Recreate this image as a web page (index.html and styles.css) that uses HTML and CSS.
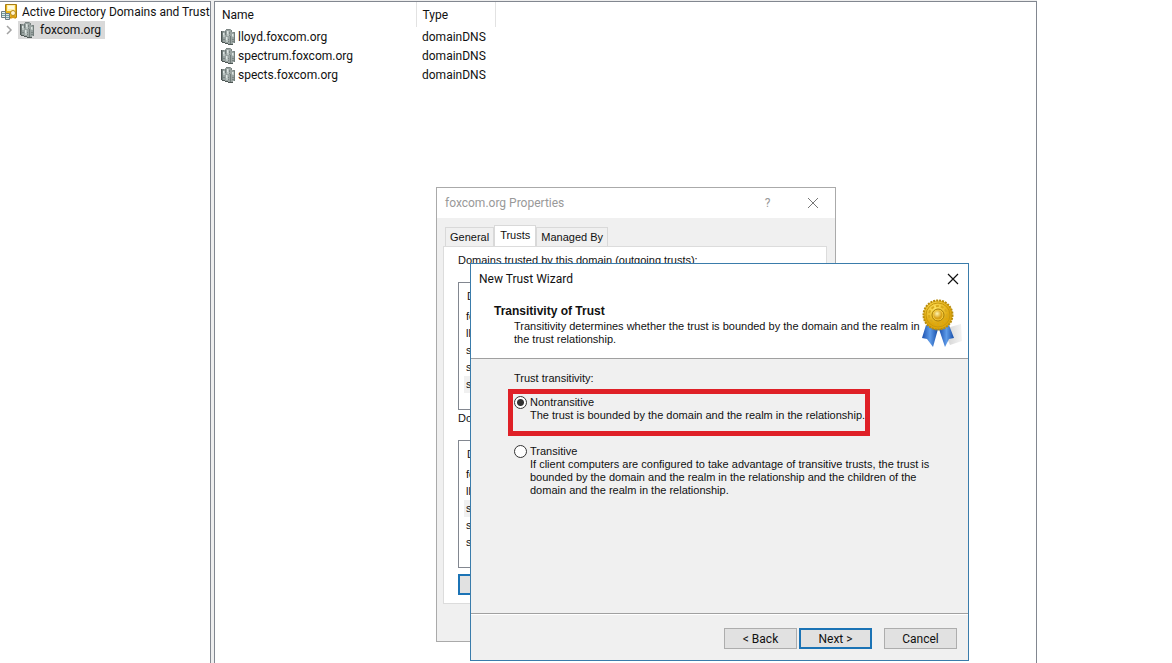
FILE: index.html
```html
<!DOCTYPE html>
<html lang="en">
<head>
    <meta charset="UTF-8">
    <meta name="viewport" content="width=device-width, initial-scale=1.0">
    <title>Active Directory Domains and Trusts</title>
    <link rel="stylesheet" href="styles.css">
</head>
<body>
    <!-- shared icon shapes -->
    <svg class="sprite" width="0" height="0">
        <symbol id="icon-domain" viewBox="0 0 15 16">
            <path d="M1 2h3V1h1V0h5v1h1v2h3v11h-2v2H7v-1H4v-2H1z" fill="#99a3a1"/>
            <path d="M1 3h1v10H1zM4 2h1v4H4zM9 7h1v8H9zM13 4h1v10h-1z" fill="#727d7b"/>
            <path d="M0 2h1v11H0zM1 13h3v1H1zM4 14h3v1H4zM7 15h5v1H7z" fill="#4e5755"/>
            <path d="M2 4h2v4H2zM6 2h2v5H6zM5 8h2v5H5zM11 5h2v3h-2z" fill="#bcc6c3"/>
            <path d="M6 2h1v3H6zM5 8h1v3H5zM2 4h1v2H2zM11 5h1v2h-1z" fill="#dde4e2"/>
            <path d="M1 2h2v1H1zM5 0h4v1H5zM10 1h1v2h-1zM12 3h2v1h-2zM8 6h1v1H8z" fill="#7b8583"/>
            <path d="M2 10h2v1H2zM11 10h2v1h-2zM11 12h2v1h-2zM7 10h1v1H7zM7 12h1v1H7zM8 3h1v2H8z" fill="#7a8482"/>
        </symbol>
    </svg>

    <div class="console">
        <div class="tree">
            <div class="tree-root">
                <svg class="icon-root" viewBox="0 0 17 17">
                    <path d="M4.500 1.500h11v13h-11z" fill="#e8b41c" stroke="#a97d12"/>
                    <path d="M6 2h8v6H6z" fill="#fff0ac"/>
                    <path d="M7 3h6v3H7z" fill="#fffbe2"/>
                    <path d="M11 11l-2 5 3-1 3 1-2-5z" fill="#d99d16"/>
                    <circle cx="12" cy="10" r="2.500" fill="#fff4cf" stroke="#b68914"/>
                    <path d="M0.500 8.500h4v6h-4z" fill="#e6eef0" stroke="#6b7d83"/>
                    <path d="M4.500 10.500h4v6h-4z" fill="#d8e2e5" stroke="#6b7d83"/>
                    <path d="M1 10.500h3M1 12.500h3M5 12.500h3M5 14.500h3" stroke="#6fa0a3"/>
                </svg>
                <span>Active Directory Domains and Trust</span>
            </div>
            <div class="tree-child">
                <svg class="chevron" viewBox="0 0 8 10"><path d="M2 1l4 4-4 4" fill="none" stroke="#a2a2a2" stroke-width="1.5"/></svg>
                <div class="tree-selected">
                    <svg class="icon-domain"><use href="#icon-domain"/></svg>
                    <span>foxcom.org</span>
                </div>
            </div>
        </div>
        <div class="list">
            <table class="domains">
                <thead>
                    <tr><th class="col-name">Name</th><th class="col-type">Type</th></tr>
                </thead>
                <tbody>
                    <tr><td><div class="domain"><svg class="icon-domain"><use href="#icon-domain"/></svg>lloyd.foxcom.org</div></td><td>domainDNS</td></tr>
                    <tr><td><div class="domain"><svg class="icon-domain"><use href="#icon-domain"/></svg>spectrum.foxcom.org</div></td><td>domainDNS</td></tr>
                    <tr><td><div class="domain"><svg class="icon-domain"><use href="#icon-domain"/></svg>spects.foxcom.org</div></td><td>domainDNS</td></tr>
                </tbody>
            </table>
        </div>
    </div>

    <div class="window properties">
        <div class="titlebar">
            <span class="title">foxcom.org Properties</span>
            <button class="title-button" aria-label="Help">?</button>
            <button class="title-button" aria-label="Close properties">
                <svg class="close" viewBox="0 0 12 12"><path d="M1 1l10 10M11 1L1 11" stroke="#777"/></svg>
            </button>
        </div>
        <div class="tabs">
            <button class="tab">General</button>
            <button class="tab active">Trusts</button>
            <button class="tab">Managed By</button>
        </div>
        <div class="panel">
            <div class="group-label">Domains trusted by this domain (outgoing trusts):</div>
            <div class="trusts">
                <div class="trusts-head">D</div>
                <div class="row">fo</div>
                <div class="row">ll</div>
                <div class="row">s</div>
                <div class="row">s</div>
                <div class="row selected">s</div>
            </div>
            <div class="group-label">Do</div>
            <div class="trusts">
                <div class="trusts-head">D</div>
                <div class="row">fo</div>
                <div class="row">ll</div>
                <div class="row selected">s</div>
                <div class="row">s</div>
                <div class="row">s</div>
            </div>
            <button class="button default new-trust" aria-label="New Trust"></button>
        </div>
    </div>

    <form class="window wizard">
        <div class="titlebar">
            <span class="title">New Trust Wizard</span>
            <button type="button" class="title-button" aria-label="Close wizard">
                <svg class="close" viewBox="0 0 12 12"><path d="M1 1l10 10M11 1L1 11" stroke="#111" stroke-width="1.2"/></svg>
            </button>
        </div>
        <div class="wizard-head">
            <div class="wizard-intro">
                <h1>Transitivity of Trust</h1>
                <p>Transitivity determines whether the trust is bounded by the domain and the realm in<br>the trust relationship.</p>
            </div>
            <svg class="medal" viewBox="0 0 42 50">
                <defs>
                    <linearGradient id="ribbon">
                        <stop offset="0" stop-color="#1b4fae"/>
                        <stop offset="0.5" stop-color="#5e9be8"/>
                        <stop offset="1" stop-color="#174da8"/>
                    </linearGradient>
                    <linearGradient id="shade">
                        <stop offset="0" stop-color="#ccc"/>
                        <stop offset="1" stop-color="#f4f4f4"/>
                    </linearGradient>
                    <radialGradient id="gold" cx="0.4" cy="0.3">
                        <stop offset="0" stop-color="#ffe562"/>
                        <stop offset="1" stop-color="#dfa70c"/>
                    </radialGradient>
                    <radialGradient id="center" cx="0.4" cy="0.35">
                        <stop offset="0" stop-color="#fff5b0"/>
                        <stop offset="1" stop-color="#d8a017"/>
                    </radialGradient>
                </defs>
                <path d="M22 30l18-5 1 17-12 4z" fill="url(#shade)"/>
                <path d="M5 26l12 4-5 18-6-8-5-1z" fill="url(#ribbon)"/>
                <path d="M18 30l10-4 5 13-5 1-4 8z" fill="url(#ribbon)"/>
                <circle cx="17" cy="16" r="14.5" fill="url(#gold)" stroke="#b98d0d" stroke-width="2" stroke-dasharray="2 1"/>
                <circle cx="17" cy="16" r="12" fill="none" stroke="#c8980f"/>
                <circle cx="17" cy="16" r="9" fill="none" stroke="#d9aa1c" stroke-width="2" stroke-dasharray="3 2"/>
                <circle cx="17" cy="16" r="6" fill="#f5cc3c" stroke="#a67c09"/>
                <circle cx="17" cy="16" r="4.5" fill="url(#center)"/>
            </svg>
        </div>
        <div class="wizard-body">
            <div class="question">Trust transitivity:</div>
            <div class="option highlighted">
                <input type="radio" name="transitivity" id="nontransitive" checked>
                <label for="nontransitive">Nontransitive<br>The trust is bounded by the domain and the realm in the relationship.</label>
            </div>
            <div class="option">
                <input type="radio" name="transitivity" id="transitive">
                <label for="transitive">Transitive<br>If client computers are configured to take advantage of transitive trusts, the trust is<br>bounded by the domain and the realm in the relationship and the children of the<br>domain and the realm in the relationship.</label>
            </div>
        </div>
        <div class="wizard-foot">
            <button type="button" class="button">&lt; Back</button>
            <button type="button" class="button default">Next &gt;</button>
            <button type="button" class="button cancel">Cancel</button>
        </div>
    </form>
</body>
</html>
```
FILE: styles.css
```css
* {
    box-sizing: border-box;
}

body {
    margin: 0;
    background-color: #ffffff;
    color: #111111;
    font-family: Roboto, 'Open Sans', sans-serif;
    font-size: 12px;
    overflow: hidden;
}

button {
    font: inherit;
    color: inherit;
    padding: 0;
}

.sprite {
    position: absolute;
}

/* Console */
.console {
    display: flex;
    gap: 3px;
    height: 100vh;
    padding-top: 1px;
    margin-right: 135px;
    background-color: #eeeeee;
}

.tree {
    width: 211px;
    flex: none;
    background-color: #ffffff;
    border-top: 1px solid #828790;
    border-right: 1px solid #828790;
    white-space: nowrap;
}

.tree-root {
    display: flex;
    align-items: center;
    gap: 4px;
    height: 19px;
    padding-left: 1px;
}

.icon-root {
    width: 17px;
    height: 17px;
    flex: none;
}

.tree-child {
    display: flex;
    align-items: center;
    gap: 5px;
    padding-left: 5px;
}

.chevron {
    width: 8px;
    height: 10px;
}

.tree-selected {
    display: flex;
    align-items: center;
    gap: 5px;
    height: 18px;
    width: 87px;
    padding-left: 2px;
    background-color: #d9d9d9;
}

.icon-domain {
    width: 15px;
    height: 16px;
    flex: none;
}

.list {
    flex: 1;
    background-color: #ffffff;
    border: 1px solid #828790;
    border-bottom: none;
}

.domains {
    border-collapse: collapse;
    table-layout: fixed;
    width: 281px;
}

.domains th {
    height: 25px;
    padding: 0 0 0 7px;
    border-right: 1px solid #e2e2e2;
    font-weight: normal;
    text-align: left;
}

.domains td {
    height: 19px;
    padding: 0 0 0 6px;
}

.domains th + th,
.domains td + td {
    padding-left: 6px;
}

.col-name {
    width: 201px;
}

.domain {
    display: flex;
    align-items: center;
    gap: 2px;
}

/* Windows */
.window {
    position: absolute;
    display: flex;
    flex-direction: column;
    background-color: #f0f0f0;
    font-family: 'Liberation Sans', sans-serif;
    font-size: 11px;
    line-height: 13px;
}

.titlebar {
    display: flex;
    align-items: center;
    height: 30px;
    padding-left: 8px;
    background-color: #ffffff;
    font-family: Roboto, 'Open Sans', sans-serif;
    font-size: 12px;
}

.title {
    flex: 1;
}

.title-button {
    display: flex;
    align-items: center;
    justify-content: center;
    width: 45px;
    height: 28px;
    border: none;
    background: none;
}

.close {
    width: 12px;
    height: 12px;
}

.properties {
    left: 436px;
    top: 187px;
    width: 400px;
    height: 455px;
    border: 1px solid #aaaaaa;
}

.properties .titlebar {
    color: #999999;
}

.tabs {
    display: flex;
    align-items: flex-end;
    height: 28px;
    padding-left: 8px;
}

.tab {
    height: 19px;
    padding: 0 4px;
    border: 1px solid #d9d9d9;
    border-bottom: none;
    background-color: #f0f0f0;
}

.tab.active {
    height: 21px;
    padding: 0 5px 2px;
    background-color: #ffffff;
}

.panel {
    display: flex;
    flex-direction: column;
    height: 358px;
    margin: 0 8px 0 6px;
    padding: 5px 14px;
    border: 1px solid #dcdcdc;
    background-color: #ffffff;
}

.group-label {
    height: 16px;
    line-height: 16px;
}

.trusts {
    height: 128px;
    margin-top: 14px;
    padding: 4px 5px;
    border: 1px solid #828790;
}

.trusts-head {
    height: 21px;
    padding-left: 3px;
    line-height: 18px;
}

.row {
    height: 17px;
    padding-left: 2px;
    line-height: 17px;
}

.row.selected {
    background-color: #f0f0f0;
}

.wizard {
    left: 470px;
    top: 263px;
    width: 499px;
    height: 398px;
    border: 1px solid #3a7cab;
}

.wizard .title-button {
    width: 31px;
}

.wizard-head {
    display: flex;
    justify-content: space-between;
    height: 65px;
    padding: 5px 5px 0 23px;
    background-color: #ffffff;
    border-bottom: 1px solid #a0a0a0;
}

.wizard h1 {
    margin: 0;
    padding-top: 5px;
    font-size: 12px;
    line-height: 15px;
}

.wizard-intro p {
    margin: 1px 0 0 20px;
    white-space: nowrap;
}

.medal {
    width: 42px;
    height: 50px;
    flex: none;
}

.wizard-body {
    flex: 1;
    padding: 13px 36px 0;
}

.question {
    padding-left: 7px;
}

.option {
    display: flex;
    align-items: flex-start;
    gap: 3px;
    padding: 0 7px;
    white-space: nowrap;
}

.highlighted {
    width: fit-content;
    height: 47px;
    margin: 4px 0 9px 1px;
    padding: 2px 0 0 1px;
    border: 5px solid #df2027;
}

.option input {
    appearance: none;
    flex: none;
    width: 13px;
    height: 13px;
    margin: 0;
    border: 1px solid #333333;
    border-radius: 50%;
    background-color: #ffffff;
}

.option input:checked {
    background-image: radial-gradient(circle, #333333 3px, transparent 4px);
}

.wizard-foot {
    display: flex;
    height: 47px;
    padding: 14px 11px 0 0;
    justify-content: flex-end;
    gap: 2px;
    border-top: 1px solid #a0a0a0;
    box-shadow: inset 0 1px #ffffff;
}

.button {
    width: 73px;
    height: 21px;
    padding-top: 1px;
    border: 1px solid #adadad;
    background-color: #e1e1e1;
    font-family: Roboto, sans-serif;
    font-size: 12px;
}

.button.default {
    border: 2px solid #1b73b5;
}

.button.cancel {
    margin-left: 10px;
}

.new-trust {
    margin-top: 6px;
}
```
